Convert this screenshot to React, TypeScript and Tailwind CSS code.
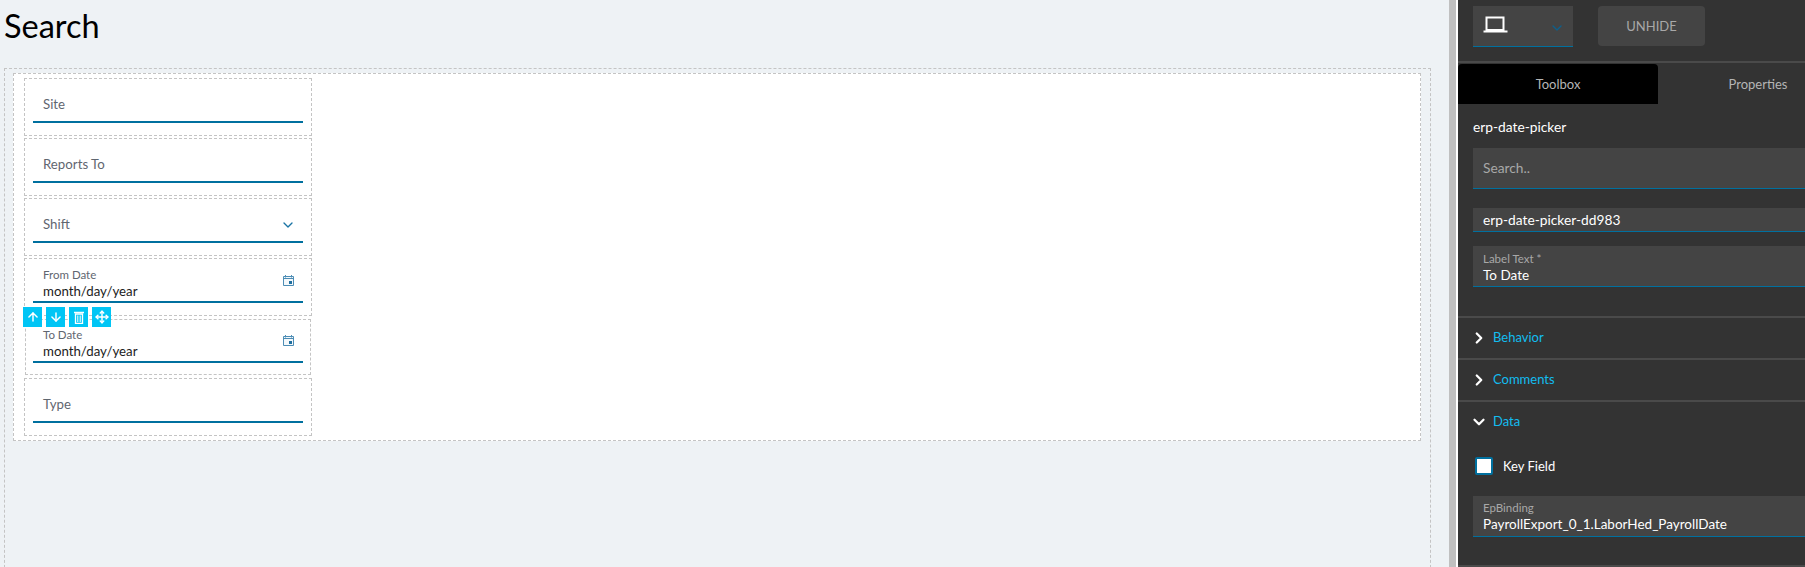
import React from "react";
import { ArrowUp, ArrowDown, Move, ChevronDown, ChevronRight } from "lucide-react";

const dash = "border border-dashed border-[#c4c4c4]";

function CalendarIcon() {
  return (
    <svg width="11" height="11" viewBox="0 0 11 11" className="shrink-0">
      <path d="M0.5 1.5H10.5V10.5H0.5Z" fill="#f4f8fb" stroke="#4d8db5" strokeWidth="1" />
      <path d="M0.5 3.5H10.5" stroke="#4d8db5" strokeWidth="1" />
      <path d="M2.5 0V2.5M8.5 0V2.5" stroke="#4d8db5" strokeWidth="1" />
      <rect x="6" y="6" width="3" height="3" fill="#1f6f9f" />
    </svg>
  );
}

function Field({ label, select, className = "" }: { label: string; select?: boolean; className?: string }) {
  return (
    <div className={`${dash} h-[58px] w-[288px] bg-white px-2 ${className}`}>
      <div className="flex h-[44px] items-end justify-between border-b-2 border-[#00709f] pl-[10px] pr-[7px] pb-[8px]">
        <span className="text-[13.25px] leading-[18px] text-[#5f6670]">{label}</span>
        {select && <ChevronDown size={16} strokeWidth={2} className="text-[#1a74a4]" />}
      </div>
    </div>
  );
}

function DateField({ label, className, inner }: { label: string; className: string; inner: string }) {
  return (
    <div className={`${dash} bg-white px-2 ${className}`}>
      <div className={`flex items-start justify-between border-b-2 border-[#00709f] pl-[10px] pr-[9px] ${inner}`}>
        <div className="flex flex-col">
          <span className="text-[11.5px] leading-[15px] text-[#5f6670]">{label}</span>
          <span className="mt-px text-[13.25px] leading-[17px] text-[#1c1c1c]">month/day/year</span>
        </div>
        <div className="mt-[8px]"><CalendarIcon /></div>
      </div>
    </div>
  );
}

function TrashIcon() {
  return (
    <svg width="12" height="13" viewBox="0 0 12 13">
      <path d="M1 1.5H11" stroke="#fff" strokeWidth="1.5" />
      <path d="M2.5 3H9.5V12.5H2.5Z" fill="none" stroke="#fff" strokeWidth="1.3" />
      <path d="M4.8 4.5V11M7.2 4.5V11" stroke="#fff" strokeWidth="1" />
    </svg>
  );
}

function ToolBtn({ children }: { children: React.ReactNode }) {
  return <div className="flex h-[20px] w-[19px] items-center justify-center bg-[#00c5f5] text-white">{children}</div>;
}

function Section({ label, open }: { label: string; open?: boolean }) {
  return (
    <div className="flex h-[42px] items-center gap-[5px] border-t-2 border-[#4a4a4a] pl-[12px]">
      {open ? <ChevronDown size={18} strokeWidth={3} className="text-white" /> : <ChevronRight size={18} strokeWidth={3} className="text-white" />}
      <span className="text-[13px] text-[#12bdf0]">{label}</span>
    </div>
  );
}

export default function App() {
  return (
    <div className="flex h-[567px] w-[1805px] overflow-hidden bg-[#eef2f5]" style={{ fontFamily: 'Lato, sans-serif' }}>
      <main className="h-full w-[1449px] shrink-0">
        <h1 className="ml-[4px] h-[68px] pt-[5px] text-[32.5px] leading-[42px] text-black">Search</h1>
        <div className={`${dash} ml-[4px] h-[520px] w-[1427px] pl-[8px] pr-[9px] pt-[4px]`}>
          <div className={`${dash} relative h-[368px] bg-white pl-[10px] pt-[4px]`}>
            <div className="flex flex-col gap-[2px]">
              <Field label="Site" />
              <Field label="Reports To" />
              <Field label="Shift" select />
              <DateField label="From Date" className="h-[58px] w-[288px]" inner="h-[44px] pt-[8px]" />
              <div className="pl-px pt-px">
                <DateField label="To Date" className="h-[56px] w-[286px]" inner="-mx-px h-[43px] pt-[7px]" />
              </div>
              <Field label="Type" className="mt-px" />
            </div>
            <div className="absolute left-[9px] top-[233px] flex gap-[4px]">
              <ToolBtn><ArrowUp size={14} strokeWidth={2.5} /></ToolBtn>
              <ToolBtn><ArrowDown size={14} strokeWidth={2.5} /></ToolBtn>
              <ToolBtn><TrashIcon /></ToolBtn>
              <ToolBtn><Move size={14} strokeWidth={2.5} /></ToolBtn>
            </div>
          </div>
        </div>
      </main>
      <div className="h-full w-[7px] shrink-0 bg-[#c0c0c0]" />
      <div className="h-full w-[2px] shrink-0 bg-white" />
      <aside className="h-full w-[347px] shrink-0 bg-[#333333]">
        <div className="flex h-[61px] items-start gap-[25px] pl-[15px] pt-[6px]">
          <div className="flex h-[41px] w-[100px] items-start justify-between border-b border-[#00709f] bg-[#444444] pl-[10px] pr-[8px] pt-[10px]">
            <svg width="25" height="18" viewBox="0 0 25 18">
              <path d="M3.5 1.5H20.5V14H3.5Z" fill="none" stroke="#fff" strokeWidth="2" />
              <path d="M0.5 15.5H24.5" stroke="#fff" strokeWidth="2" />
            </svg>
            <ChevronDown size={16} strokeWidth={2} className="mt-[4px] text-[#0e5f8a]" />
          </div>
          <div className="flex h-[40px] w-[107px] items-center justify-center rounded-[4px] bg-[#444444] pt-[2px] text-[13px] text-[#a8a8a8]">UNHIDE</div>
        </div>
        <div className="h-[2px] bg-[#4a4a4a]" />
        <div className="mt-px flex h-[40px] text-[13px] text-[#b5b5b5]">
          <div className="flex w-[200px] shrink-0 items-center justify-center rounded-t-[4px] bg-black pt-px">Toolbox</div>
          <div className="flex w-[200px] shrink-0 items-center justify-center pt-px">Properties</div>
        </div>
        <div className="flex h-[44px] items-center pl-[15px] pt-[2px] text-[13.75px] text-white">erp-date-picker</div>
        <div className="ml-[15px] flex h-[41px] items-center border-b border-[#00709f] bg-[#444444] pl-[10px] pt-px text-[13.75px] text-[#a8a8a8]">Search..</div>
        <div className="ml-[15px] mt-[19px] flex h-[24px] items-center border-b border-[#00709f] bg-[#444444] pl-[10px] pt-[2px] text-[13.75px] text-white">erp-date-picker-dd983</div>
        <div className="ml-[15px] mt-[14px] flex h-[41px] flex-col justify-center border-b border-[#00709f] bg-[#444444] pl-[10px] pt-[2px]">
          <span className="text-[11.5px] leading-[15px] text-[#a8a8a8]">Label Text *</span>
          <span className="text-[13.5px] leading-[18px] text-white">To Date</span>
        </div>
        <div className="mt-[29px]">
          <Section label="Behavior" />
          <Section label="Comments" />
          <Section label="Data" open />
        </div>
        <div className="mt-[15px] flex items-center gap-[10px] pl-[17px] leading-[18px]">
          <div className="h-[18px] w-[18px] rounded-[2px] border-2 border-[#00709f] bg-white" />
          <span className="text-[13px] text-white">Key Field</span>
        </div>
        <div className="ml-[15px] mt-[21px] flex h-[41px] flex-col justify-center border-b border-[#00709f] bg-[#444444] pl-[10px]">
          <span className="text-[11.5px] leading-[15px] text-[#a8a8a8]">EpBinding</span>
          <span className="text-[13.5px] leading-[18px] text-white">PayrollExport_0_1.LaborHed_PayrollDate</span>
        </div>
        <div className="mt-[28px] h-[2px] bg-[#4a4a4a]" />
      </aside>
    </div>
  );
}
